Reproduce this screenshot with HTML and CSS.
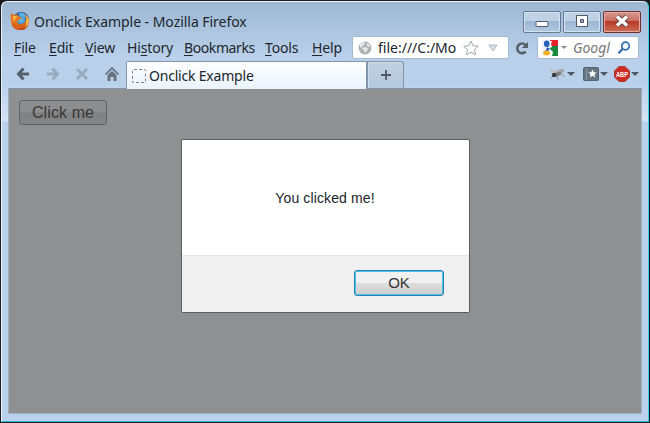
FILE: index.html
```html
<!DOCTYPE html>
<html lang="en">
<head>
<meta charset="utf-8">
<title>Onclick Example - Mozilla Firefox</title>
<link rel="stylesheet" href="styles.css">
</head>
<body>
<div class="window">
  <header class="titlebar">
    <svg class="logo" viewBox="0 0 20 20">
      <defs>
        <radialGradient id="globe"><stop offset="0" stop-color="#70c9ed"/><stop offset="1" stop-color="#164f99"/></radialGradient>
        <linearGradient id="fox" x2="0" y2="1"><stop offset="0" stop-color="#d77320"/><stop offset=".5" stop-color="#ec7a1c"/><stop offset="1" stop-color="#ba410f"/></linearGradient>
      </defs>
      <circle cx="11" cy="9" r="8" fill="url(#globe)"/>
      <path d="M9 2Q14 1 16 5L14 7 12 5 10 6Z" fill="#5db5df"/>
      <path d="M1 2 4 4 7 3 8 5 12 7 9 9 7 10Q8 14 12 13 16 12 16 8L15 3Q20 7 19 12 17 20 10 19 2 19 1 11 0 6 1 2Z" fill="url(#fox)"/>
      <path d="M16 4Q20 8 18 13L15 17Q18 10 16 4Z" fill="#ffc64e"/>
      <path d="M3 5 7 5 6 8 3 10Z" fill="#f9ae3d"/>
      <path d="M3 12Q8 18 15 14 10 20 4 16Z" fill="#e66019"/>
    </svg>
    <span class="caption">Onclick Example - Mozilla Firefox</span>
    <div class="controls">
      <div class="control"><svg viewBox="0 0 20 18"><rect x="4" y="9.5" width="12" height="5" rx="1" fill="#fff" stroke="#4e5966"/></svg></div>
      <div class="control"><svg viewBox="0 0 20 18"><path d="M4.5 3.5h11v11h-11Z" fill="#fff" stroke="#4e5966"/><path d="M8.5 7.5h3v3h-3Z" fill="#91aac7" stroke="#4e5966"/></svg></div>
      <div class="control close"><svg viewBox="0 0 20 18"><path d="m5 4.5 10 9M15 4.5l-10 9" fill="none" stroke="#654646" stroke-width="5.4"/><path d="m5 4.5 10 9M15 4.5l-10 9" fill="none" stroke="#fff" stroke-width="3.4"/></svg></div>
    </div>
  </header>

  <div class="menubar">
    <nav class="menus">
      <span><u>F</u>ile</span><span><u>E</u>dit</span><span><u>V</u>iew</span><span>Hi<u>s</u>tory</span><span class="wide"><u>B</u>ookmarks</span><span><u>T</u>ools</span><span><u>H</u>elp</span>
    </nav>
    <div class="address">
      <svg class="site" viewBox="0 0 14 14"><circle cx="7" cy="7" r="6.5" fill="#adb1b4"/><path d="M2 3 5 1 7 2 6 4 4 5 4 7 2 6ZM6 6 10 7 9 10 7 12 6 9 4 8ZM9 2 12 4 12 6 9 5Z" fill="#e8eaeb"/></svg>
      <span class="url">file:///C:/Mo</span>
      <svg class="star" viewBox="0 0 16 16"><path d="m8 1 2.1 4.7 5.2.5-3.9 3.5 1.2 5.1L8 12.2l-4.6 2.6 1.2-5.1L.7 6.2l5.2-.5Z" fill="#fcfcfc" stroke="#a5a9ac"/></svg>
      <svg class="history" viewBox="0 0 10 8"><path d="M1 1h8L5 7Z" fill="#dbe2e9" stroke="#a9b6c4"/></svg>
    </div>
    <svg class="reload" viewBox="0 0 14 14"><path d="M10.6 10.6A4.8 4.8 0 1 1 10.5 4" fill="none" stroke="#56616c" stroke-width="2.6"/><path d="M13 .8V7H7Z" fill="#56616c"/></svg>
    <div class="search">
      <svg class="google" viewBox="0 0 16 16"><path d="M8 0h8v8H8Z" fill="#e62226"/><path d="M8 6h8v10H8Z" fill="#168b40"/><path d="M0 0h8v9H0Z" fill="#edf3fc"/><path d="M0 9h8v7H0Z" fill="#fff"/><ellipse cx="4.7" cy="3.7" rx="2.8" ry="3.3" fill="#2860ba"/><path d="m5 7 3 2-3 3H1l3-2Z" fill="#2860ba"/><ellipse cx="4.6" cy="13" rx="3.5" ry="2.5" fill="#f4b327"/><path d="M8 1h2L9 4 10 7 8 8ZM8 9l3 3-1 4H8Z" fill="#fff"/></svg>
      <i class="arrow small"></i>
      <span class="engine">Googl</span>
      <svg class="find" viewBox="0 0 14 14"><circle cx="8.5" cy="5" r="3.8" fill="#f5faff" stroke="#326eac" stroke-width="1.7"/><path d="M5.8 7.8 1.5 12.3" stroke="#326eac" stroke-width="2.3"/></svg>
    </div>
  </div>

  <div class="tabbar">
    <div class="navigation">
      <svg viewBox="0 0 14 14"><path d="m7.5 1.5-5 5.5 5 5.5M3 7h10" fill="none" stroke="#53606e" stroke-width="3"/></svg>
      <svg viewBox="0 0 14 14"><path d="m6.5 1.5 5 5.5-5 5.5M11 7H1" fill="none" stroke="#98aabd" stroke-width="3"/></svg>
      <svg viewBox="0 0 14 14"><path d="m2 2 10 10M12 2 2 12" stroke="#98aabd" stroke-width="2.8"/></svg>
      <svg viewBox="0 0 14 14"><path d="M.5 7.5 7 1l6.5 6.5" fill="none" stroke="#647180" stroke-width="1.7"/><path d="M2.5 8 7 3.8 11.5 8v6H8.5v-4h-3v4h-3Z" fill="#69737e"/></svg>
    </div>
    <div class="tab"><i class="favicon"></i><span>Onclick Example</span></div>
    <div class="newtab"><svg viewBox="0 0 10 10"><path d="M5 0v10M0 5h10" stroke="#4d5966" stroke-width="1.8"/></svg></div>
    <div class="addons">
      <svg class="bug" viewBox="0 0 16 14"><path d="m1 2 4 4M13 7l2 3M4 8 2 12M8 9l1 4" fill="none" stroke="#8b9296"/><ellipse cx="5" cy="4.5" rx="4" ry="1.8" transform="rotate(18 5 4.5)" fill="#bac0c3"/><ellipse cx="11" cy="4.5" rx="4.3" ry="2.2" transform="rotate(-22 11 4.5)" fill="#a4a8aa"/><ellipse cx="8" cy="7.5" rx="4.5" ry="2" transform="rotate(-18 8 7.5)" fill="#7c7f80"/><circle cx="5" cy="8" r="2.2" fill="#383c3d"/></svg>
      <i class="arrow"></i>
      <svg class="bookmark" viewBox="0 0 16 14"><rect x=".5" y=".5" width="15" height="13" rx="1" fill="#667380" stroke="#56626e"/><path d="M3.5 1v12" stroke="#8793a0"/><path d="m9.5 2.5 1.2 2.8 3 .2-2.3 2 .8 3-2.7-1.7-2.7 1.7.8-3-2.3-2 3-.2Z" fill="#fff"/></svg>
      <i class="arrow"></i>
      <svg class="block" viewBox="0 0 16 16"><path d="M5 .5h6L15.5 5v6L11 15.5H5L.5 11V5Z" fill="#cd2b24" stroke="#ad3838"/><text x="8" y="10.9" text-anchor="middle" textLength="12" lengthAdjust="spacingAndGlyphs">ABP</text></svg>
      <i class="arrow"></i>
    </div>
  </div>

  <main class="page">
    <button class="trigger">Click me</button>
    <section class="dialog">
      <p>You clicked me!</p>
      <footer><button class="ok">OK</button></footer>
    </section>
  </main>
</div>
</body>
</html>
```
FILE: styles.css
```css
* { box-sizing: border-box; }
body { margin: 0; width: 650px; height: 423px; overflow: hidden; background: #171c20; font-family: "Noto Sans", sans-serif; color: #20262c; }
svg { display: block; flex: none; overflow: visible; }
.window { width: 648px; height: 421px; margin: 1px 0 0 1px; border: 1px solid #e8f3fc; border-right-color: #43cce4; border-bottom-color: #36bad1; border-radius: 6px 6px 0 0; padding: 0 6px 7px 6px; background: linear-gradient(#9db6d2, #acc4df 28px, #bad0eb 55px, #b9d0eb 80px, #d4e3f4 119px, #b9d1ed 120px); }
.titlebar { height: 33px; display: flex; align-items: flex-start; padding: 9px 1px 0 2px; }
.logo { width: 20px; height: 20px; }
.caption { margin: -1px 0 0 4px; width: 220px; font-size: 14px; line-height: 23px; letter-spacing: -.04px; white-space: nowrap; }
.controls { display: flex; gap: 2px; margin: 0 0 0 auto; }
.control { width: 38px; height: 22px; display: grid; place-items: center; border: 1px solid #667b95; border-radius: 2px; background: linear-gradient(#bfd1e5 0 45%, #9cb5d1 46%, #b2c9e2); box-shadow: inset 0 0 0 1px #d4e3f2; }
.control svg { width: 20px; height: 18px; margin-top: -2px; }
.close { border-color: #6f2e30; background: linear-gradient(#d89a8f, #c86d5e 46%, #b63927 47%, #ce6d57); box-shadow: inset 0 0 0 1px #e6aaa0; }
.menubar { height: 25px; display: flex; align-items: center; }
.menus { width: 344px; display: grid; grid-template-columns: 35px 36px 42px 57px 81px 47px 40px; padding-left: 6px; font-size: 14px; line-height: 22px; letter-spacing: -.15px; white-space: nowrap; }
.wide { letter-spacing: -.4px; }
u { text-underline-offset: 2px; text-decoration-thickness: 1px; }
.address, .search { height: 23px; display: flex; align-items: center; background: #fff; border: 1px solid #a4bbd4; border-radius: 2px; }
.address { width: 157px; padding-left: 5px; }
.site { width: 14px; height: 14px; }
.url { width: 85px; margin-left: 6px; font-size: 14px; letter-spacing: 0; white-space: nowrap; }
.star { width: 16px; height: 16px; }
.history { width: 10px; height: 8px; margin-left: 9px; }
.reload { width: 14px; height: 14px; margin-left: 6px; }
.search { width: 102px; margin-left: 8px; padding-left: 4px; }
.google { width: 16px; height: 16px; }
.arrow { display: block; border: 4px solid transparent; border-top-color: #4b5867; border-bottom: 0; flex: none; }
.arrow.small { margin-left: 3px; border-width: 3px; border-top-color: #868a8f; border-bottom: 0; }
.engine { width: 38px; margin-left: 6px; color: #777; font-size: 14px; font-style: italic; white-space: nowrap; }
.find { width: 14px; height: 14px; margin-left: 6px; }
.tabbar { height: 29px; display: flex; padding-top: 1px; border-bottom: 1px solid #8295aa; }
.navigation { width: 118px; display: flex; padding: 6px 0 0 8px; gap: 15.6px; }
.navigation svg { width: 14px; height: 14px; }
.tab { width: 241px; height: 28px; display: flex; align-items: center; gap: 3px; padding-left: 5px; border: 1px solid #8296ad; border-bottom: 0; border-radius: 2px 2px 0 0; background: linear-gradient(#fff, #e9f2fc); font-size: 14px; letter-spacing: -.2px; }
.favicon { width: 14px; height: 14px; border: 1px dashed #7c8289; border-radius: 2px; }
.newtab { width: 37px; height: 27px; display: grid; place-items: center; border: 1px solid #8195ac; border-bottom: 0; border-radius: 0 3px 0 0; background: linear-gradient(#c2d0df, #b4c8df); box-shadow: inset 1px 1px #cfddeb; }
.newtab svg { width: 10px; height: 10px; }
.addons { display: flex; align-items: center; margin: -2px 3px 0 auto; }
.bug { width: 16px; height: 14px; margin-right: 2px; }
.bookmark { width: 16px; height: 14px; margin: 0 1px 0 8px; }
.block { width: 16px; height: 16px; margin: 0 1px 0 6px; }
.block text { font: bold 7.5px "Liberation Sans", sans-serif; fill: #fff; }
.page { height: 325px; padding: 11px 10px; background: #8f9091; border: 1px solid #9eafc2; border-top: 0; position: relative; font-family: "Liberation Sans", sans-serif; }
.trigger { display: block; width: 88px; height: 25px; padding: 0; border: 1px solid #616264; border-radius: 3px; background: linear-gradient(#8c8d8e 48%, #7f8081 52%, #858687); color: #373839; font: 16px "Liberation Sans", sans-serif; letter-spacing: .1px; }
.dialog { position: absolute; left: 172px; top: 50px; width: 289px; height: 174px; border: 1px solid #5c5d5f; border-radius: 2px; background: #fff; overflow: hidden; }
.dialog p { margin: 0; height: 115px; padding: 1px 1px 0 0; text-align: center; font-size: 14px; line-height: 115px; letter-spacing: .12px; }
.dialog footer { height: 57px; padding: 14px 25px 0 0; border-top: 1px solid #e5e5e5; background: #f0f0f0; display: flex; justify-content: flex-end; }
.ok { width: 90px; height: 26px; padding: 0 0 2px; border: 1px solid #327fa9; border-radius: 3px; background: linear-gradient(#f1f1f1 48%, #dedede 52%, #cecece); box-shadow: inset 0 0 0 1px #47c3ec; color: #333; font: 15px "Liberation Sans", sans-serif; }
```
